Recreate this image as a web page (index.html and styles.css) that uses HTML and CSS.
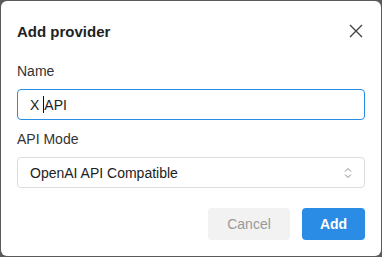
FILE: index.html
```html
<!DOCTYPE html>
<html lang="en">
<head>
    <meta charset="UTF-8">
    <title>Add provider</title>
    <link rel="stylesheet" href="styles.css">
</head>
<body>
    <div class="dialog">
        <div class="dialog-header">
            <h2>Add provider</h2>
            <span class="close-btn">
                <svg width="14" height="14" viewBox="0 0 14 14">
                    <path d="M1 1L13 13M13 1L1 13" stroke="#444" stroke-width="1.4" fill="none"/>
                </svg>
            </span>
        </div>

        <label class="field-label">Name</label>
        <div class="input focused">X <span class="caret"></span>API</div>

        <label class="field-label">API Mode</label>
        <div class="input select">
            <span>OpenAI API Compatible</span>
            <svg width="8" height="12" viewBox="0 0 8 12">
                <path d="M1 4.5L4 1.5L7 4.5M1 7.5L4 10.5L7 7.5" stroke="#888" stroke-width="1" fill="none"/>
            </svg>
        </div>

        <div class="dialog-footer">
            <button class="btn btn-cancel">Cancel</button>
            <button class="btn btn-add">Add</button>
        </div>
    </div>
</body>
</html>
```

FILE: styles.css
```css
body {
    margin: 0;
    padding: 1px;
    background-color: #5a5a5a;
    font-family: "Liberation Sans", Arial, sans-serif;
    color: #333;
}

.dialog {
    width: 380px;
    height: 255px;
    box-sizing: border-box;
    background-color: #fff;
    border-radius: 6px;
    padding: 0 16px;
}

.dialog-header {
    display: flex;
    justify-content: space-between;
    align-items: center;
    height: 60px;
}

.dialog-header h2 {
    margin: 0;
    font-size: 15px;
    font-weight: 700;
    color: #222;
}

.close-btn {
    display: flex;
    margin-right: 2px;
}

.field-label {
    display: block;
    font-size: 14px;
    line-height: 20px;
    margin-bottom: 8px;
}

.input {
    display: flex;
    align-items: center;
    height: 31px;
    box-sizing: border-box;
    border: 1px solid #ddd;
    border-radius: 4px;
    padding: 0 12px;
    font-size: 14px;
    color: #222;
    margin-bottom: 8px;
}

.input.focused {
    border-color: #2b8ce6;
    margin-bottom: 9px;
}

.caret {
    display: inline-block;
    width: 1px;
    height: 17px;
    background-color: #111;
    margin-left: 4px;
}

.select {
    justify-content: space-between;
}

.dialog-footer {
    display: flex;
    justify-content: flex-end;
    gap: 12px;
    margin-top: 20px;
}

.btn {
    height: 32px;
    border: none;
    border-radius: 4px;
    font-family: inherit;
    font-size: 14px;
    cursor: pointer;
}

.btn-cancel {
    width: 82px;
    background-color: #f2f2f2;
    color: #999;
}

.btn-add {
    width: 63px;
    background-color: #2b8ce6;
    color: #fff;
    font-weight: 700;
}
```
